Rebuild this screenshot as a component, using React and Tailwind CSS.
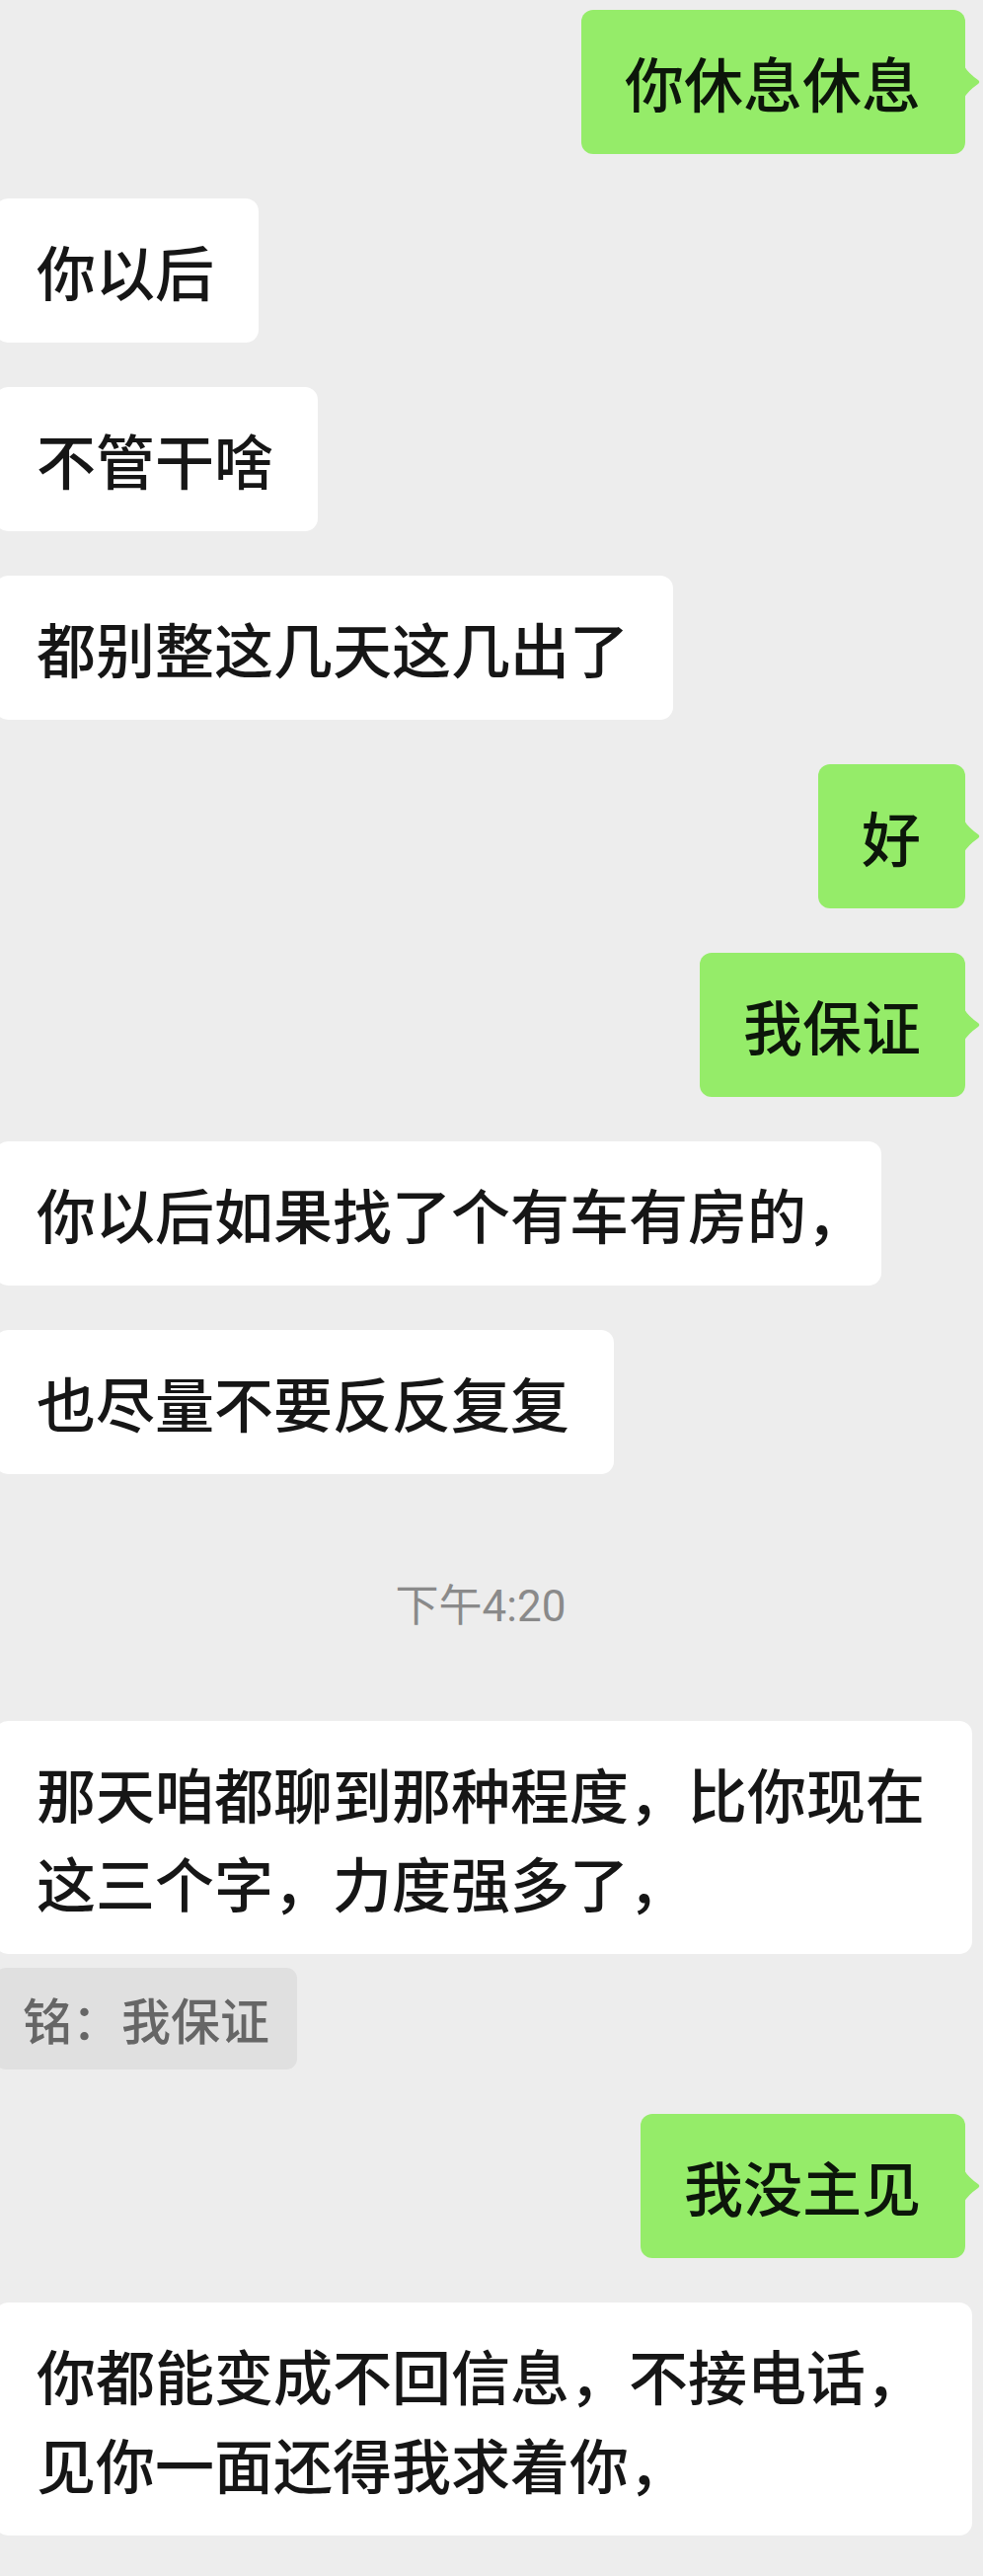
const messages = [
  { id: 1, side: "me", text: "你休息休息" },
  { id: 2, side: "other", text: "你以后" },
  { id: 3, side: "other", text: "不管干啥" },
  { id: 4, side: "other", text: "都别整这几天这几出了" },
  { id: 5, side: "me", text: "好" },
  { id: 6, side: "me", text: "我保证" },
  { id: 7, side: "other", text: "你以后如果找了个有车有房的", tail: "，" },
  { id: 8, side: "other", text: "也尽量不要反反复复" },
  { id: 9, side: "time", text: "下午4:20" },
  {
    id: 10,
    side: "other",
    text: "那天咱都聊到那种程度，比你现在这三个字，力度强多了，",
    quote: "铭：我保证",
  },
  { id: 11, side: "me", text: "我没主见" },
  { id: 12, side: "other", text: "你都能变成不回信息，不接电话，见你一面还得我求着你，" },
];

const cjk = { fontFamily: '"Noto Sans CJK SC", "Noto Sans", sans-serif' };

function Tail() {
  return (
    <svg
      className="absolute right-[-16px] top-[57px]"
      width="17"
      height="32"
      viewBox="0 0 17 32"
    >
      <path d="M0 0 Q4 7 14 14 Q16.5 16 14 18 Q4 25 0 32 Z" fill="#95ec69" />
    </svg>
  );
}

function Bubble({ msg }) {
  if (msg.side === "time") {
    return (
      <div className="pt-[61px] pb-[43px] pr-[22px] text-center">
        <span
          className="text-[44px] leading-[56px] text-[#8a8a8a]"
          style={{ fontFamily: 'Roboto, "Noto Sans CJK SC", sans-serif' }}
        >
          {msg.text}
        </span>
      </div>
    );
  }

  if (msg.side === "me") {
    return (
      <div className="flex justify-end pr-[18px]">
        <div className="relative rounded-[12px] bg-[#95ec69] pl-[44px] pr-[45px] py-[28px]">
          <p className="text-[60px] font-medium leading-[90px] text-[#0c160a]">{msg.text}</p>
          <Tail />
        </div>
      </div>
    );
  }

  return (
    <div className="flex flex-col items-start gap-[14px]">
      <div className="ml-[-5px] max-w-[990px] rounded-[13px] bg-white pl-[42px] pr-[45px] py-[28px]">
        <p className={msg.tail ? "whitespace-nowrap text-[60px] font-medium leading-[90px] text-[#161616]" : "text-[60px] font-medium leading-[90px] text-[#161616]"}>
          {msg.text}
          {msg.tail && <span className="mr-[-29px]">{msg.tail}</span>}
        </p>
      </div>
      {msg.quote && (
        <div className="ml-[-5px] rounded-[11px] bg-[#e0e0e0] pl-[28px] pr-[28px] py-[16px]">
          <p className="text-[50px] font-medium leading-[71px] text-[#666666]">{msg.quote}</p>
        </div>
      )}
    </div>
  );
}

export default function App() {
  return (
    <div
      className="min-h-[2609px] w-[996px] overflow-hidden bg-[#ededed] pt-[10px] pb-[42px]"
      style={cjk}
    >
      <div className="flex flex-col gap-[45px]">
        {messages.map((m) => (
          <Bubble key={m.id} msg={m} />
        ))}
      </div>
    </div>
  );
}
